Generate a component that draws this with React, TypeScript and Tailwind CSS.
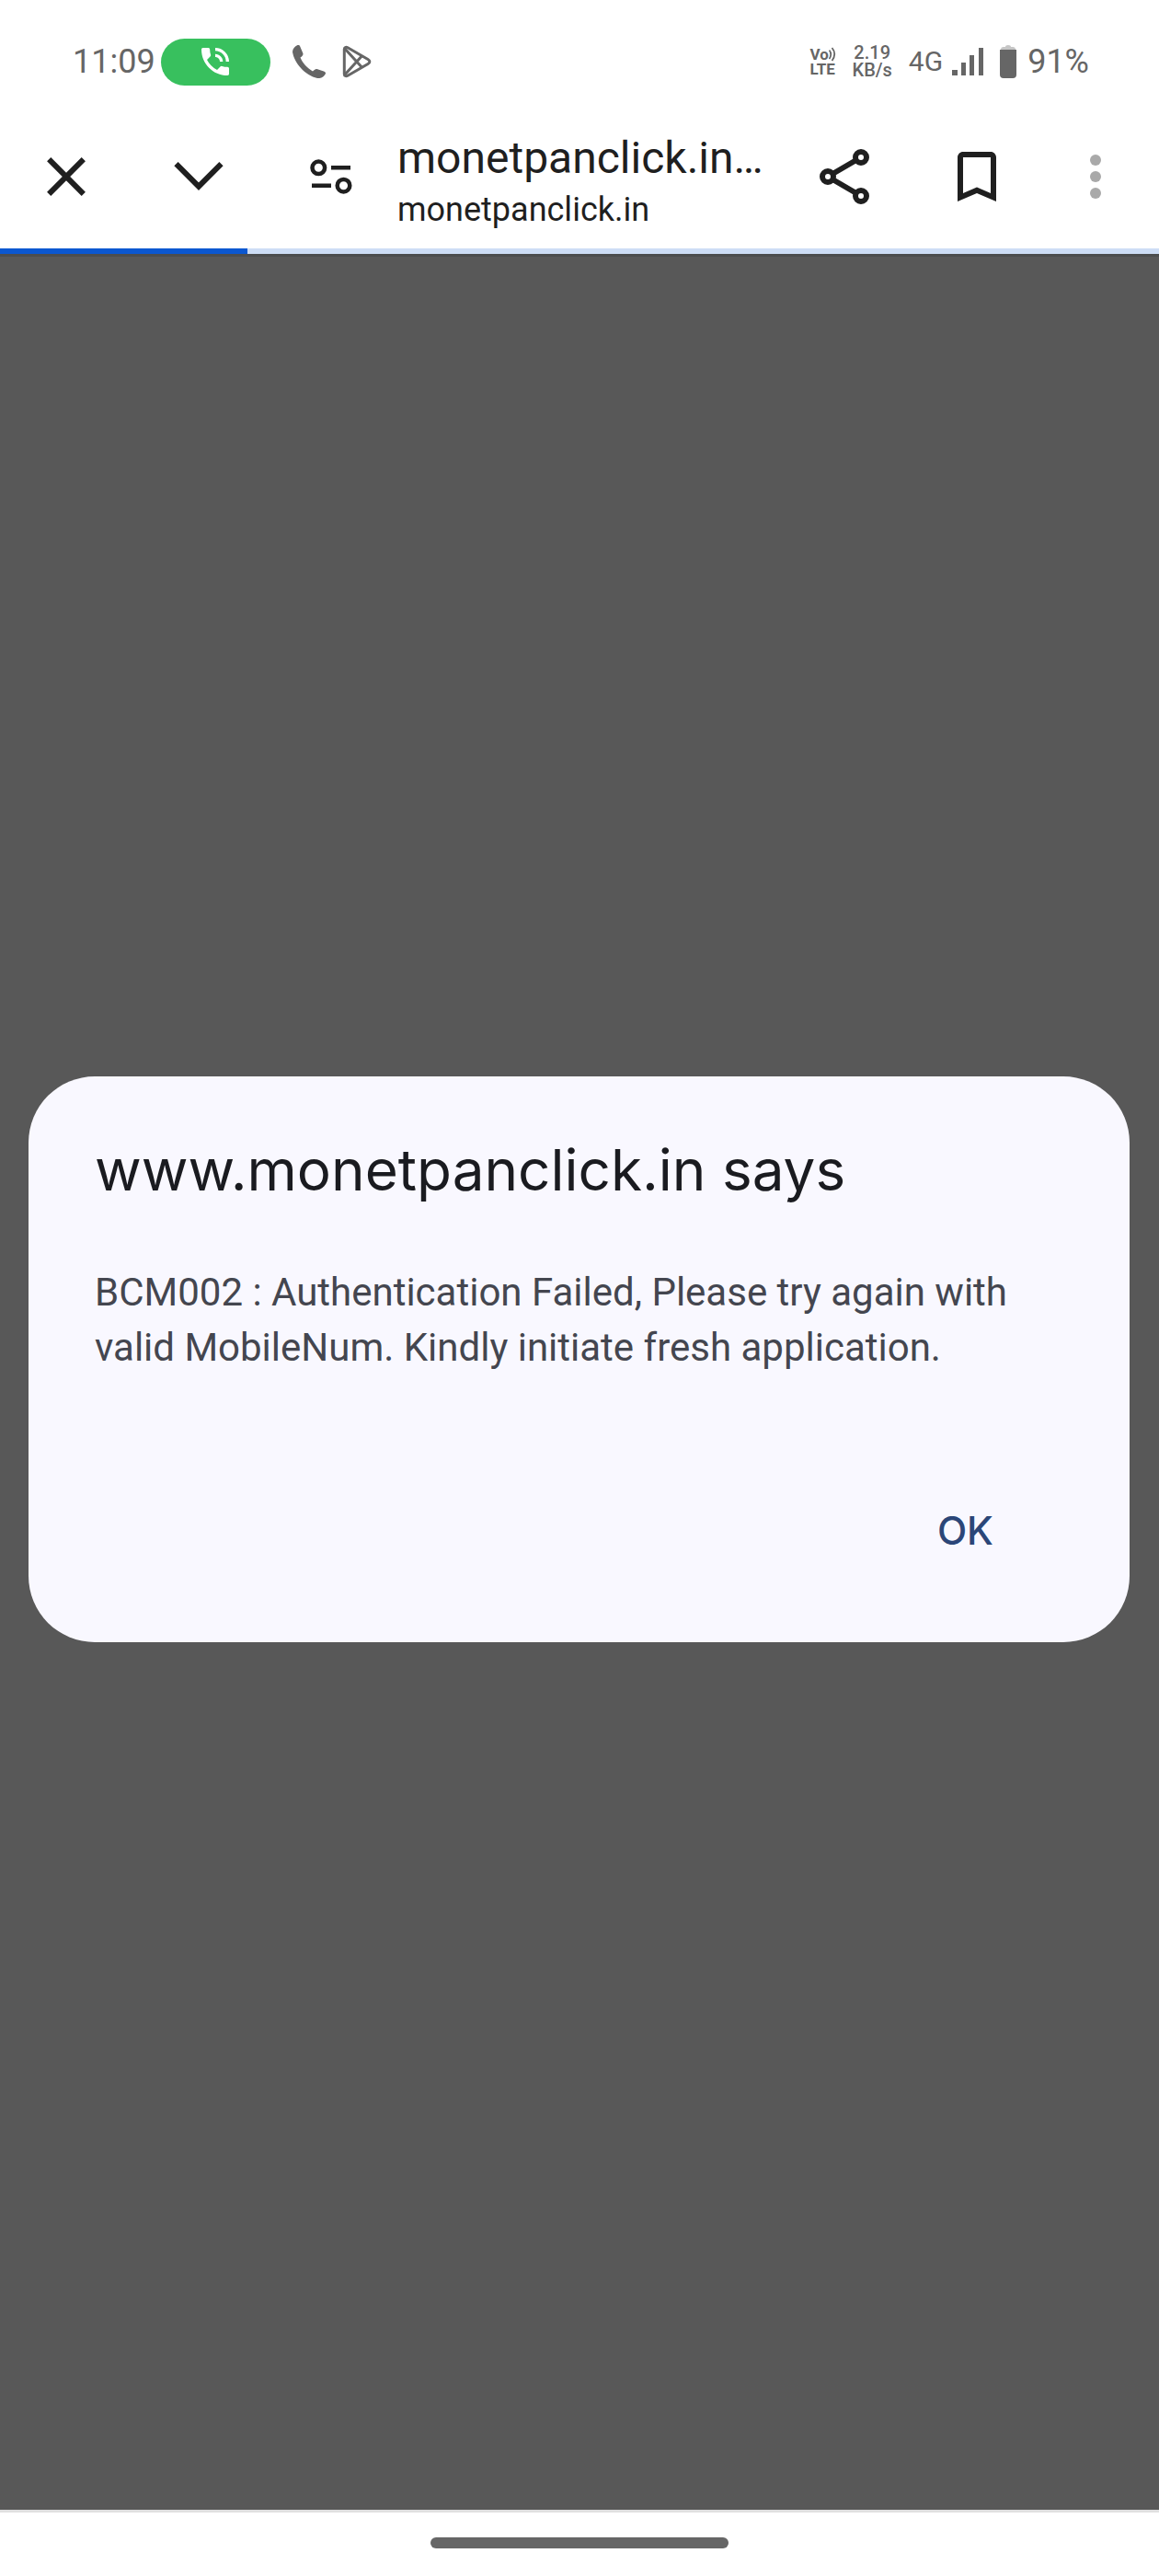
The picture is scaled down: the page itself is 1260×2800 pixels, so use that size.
import { useState, type ReactNode } from "react";
import { MdPhoneInTalk } from "react-icons/md";

const SITE = "monetpanclick.in";

function VolteIcon() {
  return (
    <span aria-label="VoLTE" className="flex w-7 flex-col text-[17px] leading-4 font-bold">
      <span className="flex items-center">
        Vo
        <svg aria-hidden="true" viewBox="0 0 8 16" className="h-4 w-2 shrink-0" fill="none" stroke="currentColor" strokeWidth="1.8">
          <path d="M0.5 3.5q3.5 4.5 0 9.500M3.500 1q5.500 6.500 0 14" />
        </svg>
      </span>
      <span>LTE</span>
    </span>
  );
}

function PhoneIcon() {
  return (
    <svg aria-hidden="true" viewBox="0 0 36 36" className="size-9" fill="currentColor">
      <path d="M5.500 0C2.500 1.500 0 4 0 7.500C2 20 14 33 27 36C31 36.500 34 34.500 36 31C36 29.500 35.500 29 34 28.500L26.500 26C25 25.700 24 26.500 22 28.500C16 25 11 19.500 8.500 13.500C10.500 12 11.800 11 11.400 9L8 1C7.500 0 6.500 -0.200 5.500 0Z" />
    </svg>
  );
}

function PlayStoreIcon() {
  return (
    <svg aria-hidden="true" viewBox="0 0 32 36" className="h-9 w-8" fill="none" stroke="currentColor" strokeWidth="3" strokeLinejoin="round">
      <path d="M2.300 4.500C2.300 2.500 4 1.800 6 2.800L28 15.500C30.500 17 30.500 19 28 20.500L6 33.200C4 34.200 2.300 33.500 2.300 31.500Z" />
      <path d="M3 4L21.500 24.200M3 32L21.500 11.800" />
    </svg>
  );
}

function SignalIcon() {
  return (
    <svg aria-hidden="true" viewBox="0 0 34 30" className="h-[30px] w-[34px]" fill="currentColor">
      <path d="M0 24h6v6H0zM10 16h5v14h-5zM19 8h5v22h-5zM29 0h5v30h-5z" />
    </svg>
  );
}

function BatteryIcon() {
  return (
    <svg aria-hidden="true" viewBox="0 0 18 36" className="h-9 w-[18px]" fill="currentColor">
      <path d="M1 5Q1 2 4 2H6Q6 0 9 0T12 2H14Q17 2 17 5Z" fill="#c6c6c6" />
      <path d="M0 5H18V32Q18 36 14 36H4Q0 36 0 32Z" />
    </svg>
  );
}

function StatusBar() {
  return (
    <div className="flex h-[134px] items-center justify-between pr-[76px] pl-[79px] text-[36px] leading-none text-[#666666]">
      <div className="flex items-center">
        <time>11:09</time>
        <span className="ml-1.5 flex h-[51px] w-[119px] items-center justify-center rounded-full bg-[#38c05e] text-white">
          <MdPhoneInTalk aria-hidden="true" className="size-10" />
        </span>
        <span className="ml-6">
          <PhoneIcon />
        </span>
        <span className="ml-[18px]">
          <PlayStoreIcon />
        </span>
      </div>
      <div className="flex items-center">
        <VolteIcon />
        <span className="ml-[18px] flex flex-col items-center text-[20px] leading-[19px] font-medium">
          <span>2.19</span>
          <span>KB/s</span>
        </span>
        <span className="ml-[18px] text-[30px]">4G</span>
        <span className="ml-2.5">
          <SignalIcon />
        </span>
        <span className="ml-[18px]">
          <BatteryIcon />
        </span>
        <span className="ml-3">91%</span>
      </div>
    </div>
  );
}

interface ToolbarButtonProps {
  label: string;
  narrow?: boolean;
  children: ReactNode;
}

function ToolbarButton({ label, narrow = false, children }: ToolbarButtonProps) {
  return (
    <button
      type="button"
      aria-label={label}
      className={`flex h-full shrink-0 items-center justify-center ${narrow ? "w-[114px]" : "w-36"}`}
    >
      <svg aria-hidden="true" viewBox="0 0 72 72" className="size-[72px]" fill="none" stroke="currentColor" strokeWidth="6">
        {children}
      </svg>
    </button>
  );
}

function Toolbar() {
  return (
    <header className="flex h-[136px] pr-3 pb-5 text-[#1f1f1f]">
      <ToolbarButton label="Close tab">
        <path d="M17.200 17.200L54.800 54.800M54.800 17.200L17.200 54.800" />
      </ToolbarButton>
      <ToolbarButton label="Minimize">
        <path d="M11.500 22.200L36 46.700L60.500 22.200" />
      </ToolbarButton>
      <ToolbarButton label="Site information">
        <g strokeWidth="4.500">
          <circle cx="22.300" cy="26.300" r="6.800" />
          <circle cx="49.500" cy="45.700" r="6.800" />
          <path d="M36 26.300H57M15 45.700H36" />
        </g>
      </ToolbarButton>
      <div className="min-w-0 flex-1 pt-2">
        <h1 className="truncate text-[48px] leading-[60px]">{SITE}…</h1>
        <p className="truncate text-[36px] leading-[52px]">{SITE}</p>
      </div>
      <ToolbarButton label="Share">
        <circle cx="54" cy="15" r="6" />
        <circle cx="18" cy="36" r="6" />
        <circle cx="54" cy="57" r="6" />
        <path d="M24 32.500L48 18.500M24 39.500L48 53.500" />
      </ToolbarButton>
      <ToolbarButton label="Bookmark">
        <path
          d="M51 9H21c-3.300 0-6 2.700-6 6v48l21-9 21 9V15c0-3.300-2.700-6-6-6zm0 45l-15-6.540L21 54V15h30z"
          fill="currentColor"
          stroke="none"
        />
      </ToolbarButton>
      <ToolbarButton label="More options" narrow>
        <g fill="#a9a9a9" stroke="none">
          <circle cx="36" cy="18" r="6" />
          <circle cx="36" cy="36" r="6" />
          <circle cx="36" cy="54" r="6" />
        </g>
      </ToolbarButton>
    </header>
  );
}

function AlertDialog({ onClose }: { onClose: () => void }) {
  return (
    <div
      role="alertdialog"
      aria-labelledby="alert-title"
      aria-describedby="alert-message"
      className="flex w-full flex-col rounded-[72px] bg-[#f9f8ff] px-[72px] pt-[60px] pb-[62px]"
    >
      <h2 id="alert-title" className="font-['Inter',sans-serif] text-[62px] leading-[84px] text-[#1a1b20]">
        www.{SITE} says
      </h2>
      <p id="alert-message" className="mt-[61px] text-[42px] leading-[60px] text-[#44464f]">
        BCM002 : Authentication Failed, Please try again with valid MobileNum. Kindly initiate fresh application.
      </p>
      <button
        type="button"
        onClick={onClose}
        className="mt-[108px] mr-7 h-[120px] self-end rounded-full px-12 font-['Inter',sans-serif] text-[42px] font-medium text-[#2b4678]"
      >
        OK
      </button>
    </div>
  );
}

export default function App() {
  const [open, setOpen] = useState(true);

  return (
    <div className="flex min-h-screen flex-col bg-white font-['Roboto',sans-serif]">
      <StatusBar />
      <Toolbar />
      <div role="progressbar" aria-label="Page loading" aria-valuenow={21} className="h-1.5 bg-[#cdddf5]">
        <div className="h-full bg-[#0b57d0]" style={{ width: `${(269 / 1260) * 100}%` }} />
      </div>
      <main className="flex flex-1 items-center border-t-3 border-[#4b4d4e] bg-[#585858] pr-8 pb-[52px] pl-[31px]">
        {open ? <AlertDialog onClose={() => setOpen(false)} /> : null}
      </main>
      <footer className="flex h-[72px] justify-center border-t-3 border-[#e0e0e0] pt-[27px]">
        <div className="h-3 w-[324px] rounded-full bg-[#666666]" />
      </footer>
    </div>
  );
}
